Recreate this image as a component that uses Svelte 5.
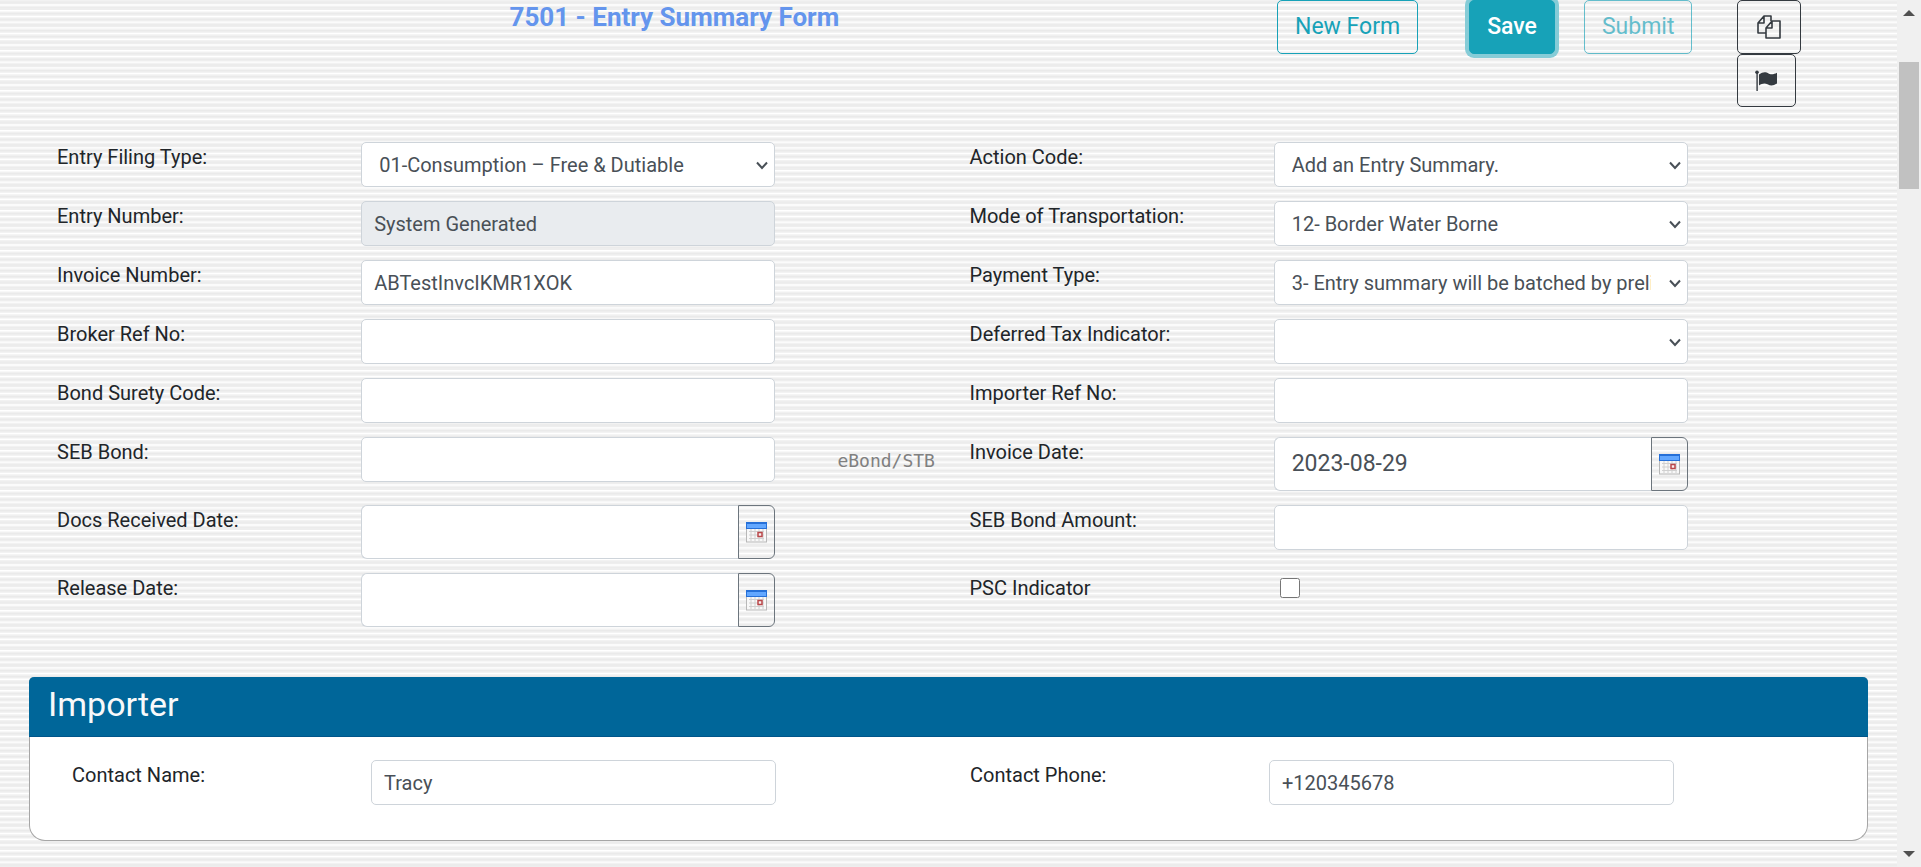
<script>
  const fields = [
    { id: 'filing', label: 'Entry Filing Type:', kind: 'select', value: '01-Consumption – Free & Dutiable' },
    { id: 'action', label: 'Action Code:', kind: 'select', value: 'Add an Entry Summary.' },
    { id: 'entry', label: 'Entry Number:', kind: 'text', value: 'System Generated', readonly: true },
    { id: 'mode', label: 'Mode of Transportation:', kind: 'select', value: '12- Border Water Borne' },
    { id: 'invoice', label: 'Invoice Number:', kind: 'text', value: 'ABTestInvcIKMR1XOK' },
    { id: 'payment', label: 'Payment Type:', kind: 'select', value: '3- Entry summary will be batched by preliminary statement' },
    { id: 'broker', label: 'Broker Ref No:', kind: 'text', value: '' },
    { id: 'deferred', label: 'Deferred Tax Indicator:', kind: 'select', value: '' },
    { id: 'surety', label: 'Bond Surety Code:', kind: 'text', value: '' },
    { id: 'importerRef', label: 'Importer Ref No:', kind: 'text', value: '' },
    { id: 'seb', label: 'SEB Bond:', kind: 'text', value: '', note: 'eBond/STB' },
    { id: 'invoiceDate', label: 'Invoice Date:', kind: 'date', value: '2023-08-29' },
    { id: 'docs', label: 'Docs Received Date:', kind: 'date', value: '' },
    { id: 'sebAmount', label: 'SEB Bond Amount:', kind: 'text', value: '' },
    { id: 'release', label: 'Release Date:', kind: 'date', value: '' },
    { id: 'psc', label: 'PSC Indicator', kind: 'check' }
  ];
</script>

<div class="page">
  <main>
    <header>
      <h1>7501 - Entry Summary Form</h1>
      <div class="actions">
        <button class="btn outline">New Form</button>
        <button class="btn save">Save</button>
        <button class="btn outline submit" disabled>Submit</button>
      </div>
      <div class="tools">
        <button class="btn dark copy" aria-label="Copy form">
          <svg width="24" height="24" viewBox="0 0 24 24" fill="none" stroke="currentColor" stroke-width="1.6" stroke-linejoin="round">
            <path d="M9 18H1V8L7 1H14V6M7 1V8H1" />
            <path d="M9 13L15 6H23V23H9ZM15 6V13H9" />
          </svg>
        </button>
        <button class="btn dark flag" aria-label="Flag form">
          <svg width="24" height="22" viewBox="0 0 24 22" fill="currentColor">
            <circle cx="2" cy="2.2" r="1.8" /><path d="M1.4 2H2.8V21H1.4Z" />
            <path d="M4 4.5C8 2 10 1.6 14 3.7C17 5 19 4.2 22 2.8V13.5C18 15.8 16 16 12.5 14.2C9.5 12.8 7 13.5 4 15.4Z" />
          </svg>
        </button>
      </div>
    </header>

    <form>
      {#each fields as f}
        <div class="field">
          <label for={f.id}>{f.label}</label>
          <div class="control">
            {#if f.kind === 'select'}
              <div class="select">
                <select id={f.id}><option>{f.value}</option></select>
                <svg width="12" height="9" viewBox="0 0 12 9" fill="none" stroke="#495057" stroke-width="2"><path d="M1 1.5L6 7L11 1.5" /></svg>
              </div>
            {:else if f.kind === 'date'}
              <div class="date">
                <input id={f.id} type="text" value={f.value} />
                <button type="button" aria-label="Pick date">
                  <svg width="21" height="21" viewBox="0 0 21 21">
                    <rect x="0.5" y="6.5" width="20" height="13.5" fill="#f8f8f8" stroke="#b8b8b8" />
                    <path d="M3 9.5H18M3 13H18M3 16.5H18M5 7V19M9 7V19M13 7V19M17 7V19" stroke="#d0d0d0" />
                    <rect width="21" height="7" fill="#2670d8" /><rect x="1" y="2" width="19" height="4" fill="#62a7ff" />
                    <rect x="12" y="10.5" width="4" height="4" fill="#f8eeee" stroke="#b9474a" stroke-width="1.5" />
                  </svg>
                </button>
              </div>
            {:else if f.kind === 'check'}
              <input id={f.id} class="check" type="checkbox" />
            {:else}
              <input id={f.id} class="text" type="text" value={f.value} readonly={f.readonly} />
            {/if}
          </div>
          {#if f.note}<span class="note">{f.note}</span>{/if}
        </div>
      {/each}
    </form>

    <section>
      <h2>Importer</h2>
      <div class="contacts">
        <label for="contactName">Contact Name:</label>
        <input id="contactName" class="text" type="text" value="Tracy" />
        <label for="contactPhone">Contact Phone:</label>
        <input id="contactPhone" class="text" type="tel" value="+120345678" />
      </div>
    </section>
  </main>
  <div class="scrollbar" aria-hidden="true">
    <svg width="12" height="6" viewBox="0 0 12 6"><path d="M0 6L6 0L12 6Z" fill="#505050" /></svg>
    <div class="thumb"></div>
    <svg class="down" width="12" height="6" viewBox="0 0 12 6"><path d="M0 0H12L6 6Z" fill="#505050" /></svg>
  </div>
</div>

<style>
  :global(body) { margin: 0; }
  .page, .page * { box-sizing: border-box; }
  .page {
    display: flex;
    min-height: 100vh;
    font-family: Roboto, "Liberation Sans", sans-serif;
    font-size: 20px;
    line-height: 30px;
    color: #212529;
  }
  main {
    flex: 1;
    min-width: 0;
    padding: 0 29px;
    background-color: #f2f2f2;
    /* seven thin stripes in every 40px tile */
    background-image: url("data:image/svg+xml,%3Csvg xmlns='http://www.w3.org/2000/svg' width='4' height='40' viewBox='0 0 4 28' preserveAspectRatio='none'%3E%3Crect width='4' height='28' fill='%23f2f2f2'/%3E%3Cpath d='M0 1.5h4M0 5.5h4M0 9.5h4M0 13.5h4M0 17.5h4M0 21.5h4M0 25.5h4' stroke='%23eaeaea'/%3E%3Cpath d='M0 2.5h4M0 6.5h4M0 10.5h4M0 14.5h4M0 18.5h4M0 22.5h4M0 26.5h4' stroke='%23eeeeee'/%3E%3Cpath d='M0 3.5h4M0 7.5h4M0 11.5h4M0 15.5h4M0 19.5h4M0 23.5h4M0 27.5h4' stroke='%23fff'/%3E%3C/svg%3E");
    background-size: 4px 40px;
  }
  header {
    display: grid;
    grid-template-columns: 1248fr 460fr 131fr;
    height: 142px;
  }
  h1 {
    margin: 0;
    padding-left: 38.5%;
    font-size: 26px;
    line-height: 35px;
    font-weight: 700;
    color: #6495ed;
  }
  .actions { display: flex; align-items: flex-start; }
  .btn {
    height: 54px;
    padding: 0 17px;
    border: 1px solid #17a2b8;
    border-radius: 5px;
    background: transparent;
    color: #17a2b8;
    font: 500 23px/30px Roboto, sans-serif;
  }
  .outline { font-weight: 400; }
  .save { margin: 0 29px 0 51px; background: #17a2b8; color: #fff; box-shadow: 0 0 0 4px #86ccd7; }
  .submit { opacity: 0.65; }
  .tools { display: flex; flex-direction: column; align-items: flex-start; }
  .dark { display: grid; place-items: center; border-color: #343a40; color: #343a40; padding: 0; }
  .copy { width: 64px; }
  .flag { width: 59px; height: 53px; }
  form {
    display: grid;
    grid-template-columns: 1fr 1fr;
    row-gap: 14px;
    margin-right: -14px;
    padding-left: 28px;
  }
  .field { display: grid; grid-template-columns: 304fr 414fr 194fr; align-items: start; }
  .control { min-width: 0; display: flex; }
  input, select, .date button { font: inherit; color: #495057; margin: 0; }
  .text, select {
    width: 100%;
    height: 45px;
    padding: 0 12px;
    border: 1px solid #ced4da;
    border-radius: 5px;
    background: #fff;
  }
  .text[readonly] { background: #e9ecef; }
  .select { position: relative; width: 100%; display: flex; }
  select { appearance: none; padding: 0 36px 0 17px; }
  .select svg { position: absolute; right: 7px; top: 19px; pointer-events: none; }
  .date { display: flex; width: 100%; height: 54px; }
  .date input {
    flex: 1;
    min-width: 0;
    padding: 0 17px;
    border: 1px solid #ced4da;
    border-right: 0;
    border-radius: 6px 0 0 6px;
    background: #fff;
    font-size: 23px;
  }
  .date button {
    display: grid;
    place-items: center;
    width: 37px;
    padding: 0;
    border: 1px solid #6c757d;
    border-radius: 0 6px 6px 0;
    background: transparent;
  }
  .check { width: 20px; height: 20px; margin: 5px 0 0 6px; }
  .note { padding: 9px 0 0 62px; font: 18px/30px "DejaVu Sans Mono", monospace; color: #808080; }
  section {
    margin-top: 50px;
    border: 1px solid #a6a6a6;
    border-top: 0;
    border-radius: 5px 5px 16px 16px;
    background: #fff;
  }
  h2 {
    margin: 0 -1px;
    padding: 7px 19px 12px;
    border-bottom: 1px solid #00558a;
    border-radius: 5px 5px 0 0;
    background: #069;
    color: #f8f9fa;
    font-size: 34px;
    font-weight: 400;
    line-height: 40px;
  }
  .contacts {
    display: grid;
    grid-template-columns: 299fr 405fr 194fr 299fr 405fr 193fr;
    padding: 23px 0 35px 42px;
  }
  .contacts label:nth-of-type(2) { grid-column: 4; }
  .scrollbar {
    display: flex;
    flex-direction: column;
    align-items: center;
    width: 24px;
    padding: 10px 0;
    background: #f0f0f0;
  }
  .thumb { width: 20px; height: 127px; margin-top: 46px; background: #c1c1c1; }
  .down { margin-top: auto; }
</style>
